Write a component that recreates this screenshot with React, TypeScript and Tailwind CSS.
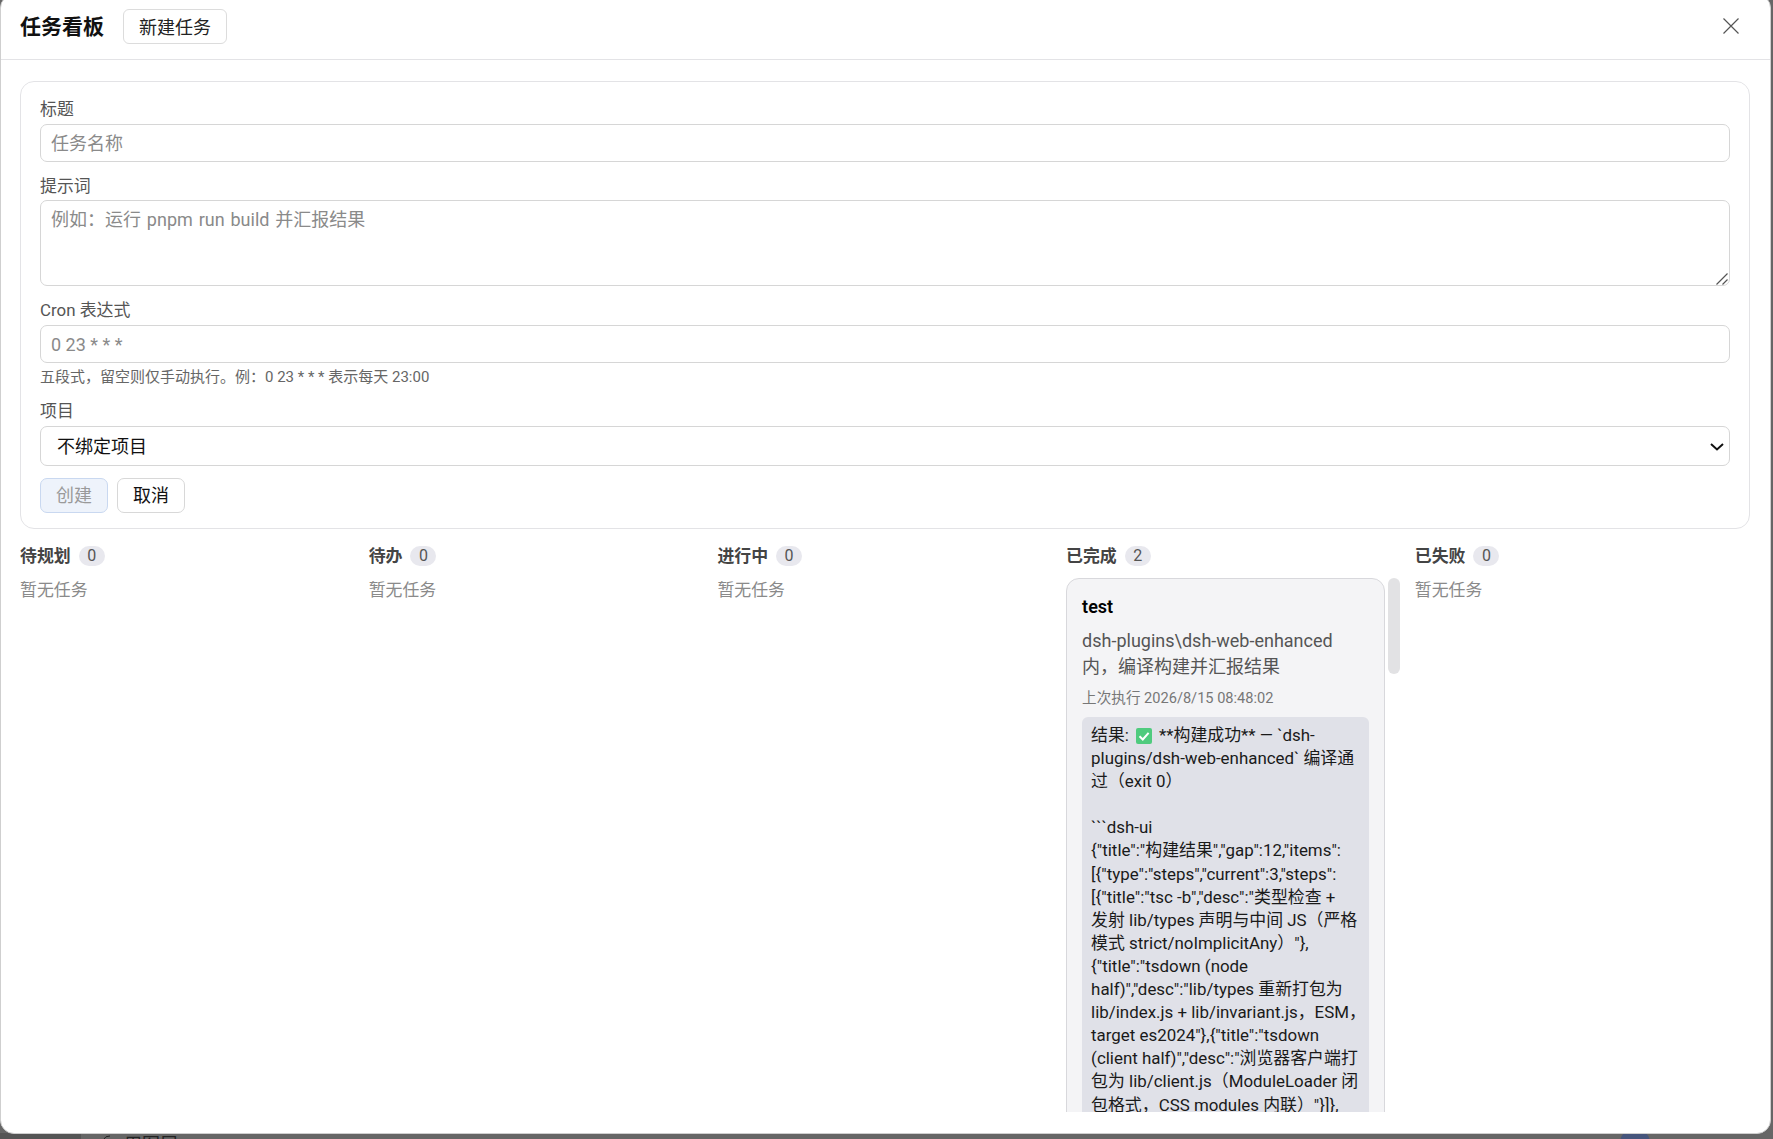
import React from "react";

const columns = [
  { title: "待规划", count: 0 },
  { title: "待办", count: 0 },
  { title: "进行中", count: 0 },
  { title: "已完成", count: 2 },
  { title: "已失败", count: 0 },
];

const resultLines = [
  "plugins/dsh-web-enhanced` 编译通",
  "过（exit 0）",
  "\u00a0",
  "```dsh-ui",
  '{"title":"构建结果","gap":12,"items":',
  '[{"type":"steps","current":3,"steps":',
  '[{"title":"tsc -b","desc":"类型检查 +',
  "发射 lib/types 声明与中间 JS（严格",
  '模式 strict/noImplicitAny）"},',
  '{"title":"tsdown (node',
  'half)","desc":"lib/types 重新打包为',
  "lib/index.js + lib/invariant.js，ESM，",
  'target es2024"},{"title":"tsdown',
  '(client half)","desc":"浏览器客户端打',
  "包为 lib/client.js（ModuleLoader 闭",
  '包格式，CSS modules 内联）"}]},',
];

function Field({ label, tight, children }: { label: string; tight?: boolean; children: React.ReactNode }) {
  return (
    <div className={tight ? "flex flex-col gap-[2px]" : "flex flex-col gap-[3px]"}>
      <label className="text-[16.9px] leading-[24px] text-[#555]">{label}</label>
      {children}
    </div>
  );
}

const inputCls =
  "h-[38px] w-full rounded-[7px] border border-[#d6d6d6] bg-white px-[10px] text-[18px] outline-none placeholder:text-[#8a8a8a]";

function TaskCard() {
  return (
    <div className="min-h-[600px] w-[319px] shrink-0 rounded-[13px] border border-[#d8d8dc] bg-[#f4f4f6] px-[15px] pt-[15px]">
      <div className="text-[18px] font-semibold leading-[26px] text-black">test</div>
      <div className="mt-[8px] text-[18px] leading-[26px] text-[#555]">
        <div className="whitespace-nowrap">dsh-plugins\dsh-web-enhanced</div>
        <div className="whitespace-nowrap">内，编译构建并汇报结果</div>
      </div>
      <div className="mt-[8px] whitespace-nowrap text-[14.6px] leading-[20px] text-[#777]">
        上次执行 2026/8/15 08:48:02
      </div>
      <div className="mt-[9px] rounded-[6px] bg-[#e0e1e8] px-[9px] pt-[7px] pb-[10px] text-[16.9px] leading-[23.1px] text-[#1a1a1a]">
        <div className="flex items-center whitespace-nowrap">
          <span>结果:</span>
          <svg viewBox="0 0 16 16" className="mx-[7px] h-[16px] w-[16px] shrink-0">
            <rect width="16" height="16" rx="2" fill="#4fcb7e" />
            <path d="M3.5 8.2 6.8 11.5 12.6 4.8" fill="none" stroke="#fff" strokeWidth="2" />
          </svg>
          <span>**构建成功** — `dsh-</span>
        </div>
        {resultLines.map((l, i) => (
          <div key={i} className="whitespace-nowrap">
            {l}
          </div>
        ))}
      </div>
    </div>
  );
}

export default function App() {
  return (
    <div className="relative h-screen w-full overflow-hidden bg-[#666] font-['Roboto','Noto_Sans_CJK_SC',sans-serif]">
      <div className="absolute bottom-0 left-0 h-[6px] w-[81px] bg-[#555]" />
      <svg viewBox="0 0 8 4" className="absolute left-[103px] top-[1135px] h-[4px] w-[8px]">
        <path d="M1 4 Q2 1 7 1" fill="none" stroke="#222" strokeWidth="1" />
      </svg>
      <div className="absolute left-[124px] top-[1133px] text-[18px] leading-[24px] text-[#222]">用图层</div>
      <div className="absolute left-[1620px] top-[1128px] h-[30px] w-[30px] rounded-full bg-[#46557c]" />

      <div className="absolute left-0 top-[-6px] flex h-[1140px] w-[1771px] flex-col overflow-hidden rounded-[14px] border border-[#cfcfcf] bg-white">
        <header className="flex h-[65px] shrink-0 items-end border-b border-[#e3e3e6] pb-[15px] pl-[19px] pr-[27px]">
          <div className="flex w-full items-center">
            <h1 className="pt-[2px] text-[21px] font-bold leading-[34px] text-[#111]">任务看板</h1>
            <button className="ml-[19px] h-[35px] w-[104px] rounded-[6px] border border-[#dcdcdc] bg-white pt-[3px] text-[18px] leading-none text-[#222]">
              新建任务
            </button>
            <button className="ml-auto flex h-[24px] w-[24px] items-center justify-center" aria-label="关闭">
              <svg viewBox="0 0 16 16" className="h-[16px] w-[16px]">
                <path d="M0.5 0.5 15.5 15.5M15.5 0.5 0.5 15.5" fill="none" stroke="#555" strokeWidth="1.2" />
              </svg>
            </button>
          </div>
        </header>

        <div className="flex min-h-0 flex-1 flex-col pl-[19px] pr-[20px] pb-[21px] pt-[21px]">
          <form className="flex shrink-0 flex-col gap-[12px] rounded-[14px] border border-[#e3e3e6] px-[19px] pb-[15px] pt-[15px]">
            <Field label="标题">
              <input className={inputCls} placeholder="任务名称" />
            </Field>
            <Field label="提示词" tight>
              <div className="relative">
                <textarea
                  className="block h-[86px] w-full resize-none rounded-[7px] border border-[#d6d6d6] bg-white px-[10px] py-[6px] text-[18px] leading-[26px] [word-spacing:1.4px] outline-none placeholder:text-[#8a8a8a]"
                  placeholder="例如：运行 pnpm run build 并汇报结果"
                />
                <svg viewBox="0 0 12 12" className="pointer-events-none absolute bottom-[1px] right-[2px] h-[12px] w-[12px]">
                  <path d="M0.5 11.5 11.5 0.5M6.5 11.5 11.5 6.5" fill="none" stroke="#555" strokeWidth="1.2" />
                </svg>
              </div>
            </Field>
            <div className="flex flex-col gap-[4px]">
              <Field label="Cron 表达式">
                <input className={inputCls} placeholder="0 23 * * *" />
              </Field>
              <div className="text-[15px] leading-[20px] text-[#666]">
                五段式，留空则仅手动执行。例：0 23 * * * 表示每天 23:00
              </div>
            </div>
            <Field label="项目">
              <div className="relative">
                <select className="h-[40px] w-full appearance-none rounded-[7px] border border-[#d6d6d6] bg-white px-[16px] text-[18px] text-[#111] outline-none">
                  <option>不绑定项目</option>
                </select>
                <svg viewBox="0 0 14 8" className="pointer-events-none absolute right-[6px] top-[17px] h-[8px] w-[14px]">
                  <path d="M1 1 7 6.5 13 1" fill="none" stroke="#111" strokeWidth="2" />
                </svg>
              </div>
            </Field>
            <div className="flex gap-[9px]">
              <button
                type="button"
                disabled
                className="h-[35px] w-[68px] rounded-[7px] border border-[#c9d8f0] bg-[#eef3fb] text-[18px] leading-none text-[#9a9a9a]"
              >
                创建
              </button>
              <button
                type="button"
                className="h-[35px] w-[68px] rounded-[7px] border border-[#d8d8d8] bg-white text-[18px] leading-none text-[#111]"
              >
                取消
              </button>
            </div>
          </form>

          <div className="mt-[17px] grid min-h-0 flex-1 grid-cols-5 gap-x-[13.5px]">
            {columns.map((c) => (
              <section key={c.title} className="flex min-h-0 flex-col gap-[12px]">
                <div className="flex h-[20px] shrink-0 items-center gap-[8px]">
                  <h2 className="text-[16.9px] font-bold leading-[20px] text-[#444]">{c.title}</h2>
                  <span className="flex h-[20px] w-[26px] items-center justify-center rounded-full bg-[#e8e8ee] text-[16px] leading-none text-[#555]">
                    {c.count}
                  </span>
                </div>
                {c.count > 0 ? (
                  <div className="flex min-h-0 flex-1 gap-[3px] overflow-hidden">
                    <TaskCard />
                    <div className="w-[12px] shrink-0">
                      <div className="h-[96px] rounded-[6px] bg-[#e2e2e4]" />
                    </div>
                  </div>
                ) : (
                  <div className="text-[16.9px] leading-[24px] text-[#8a8a8a]">暂无任务</div>
                )}
              </section>
            ))}
          </div>
        </div>
      </div>
    </div>
  );
}
